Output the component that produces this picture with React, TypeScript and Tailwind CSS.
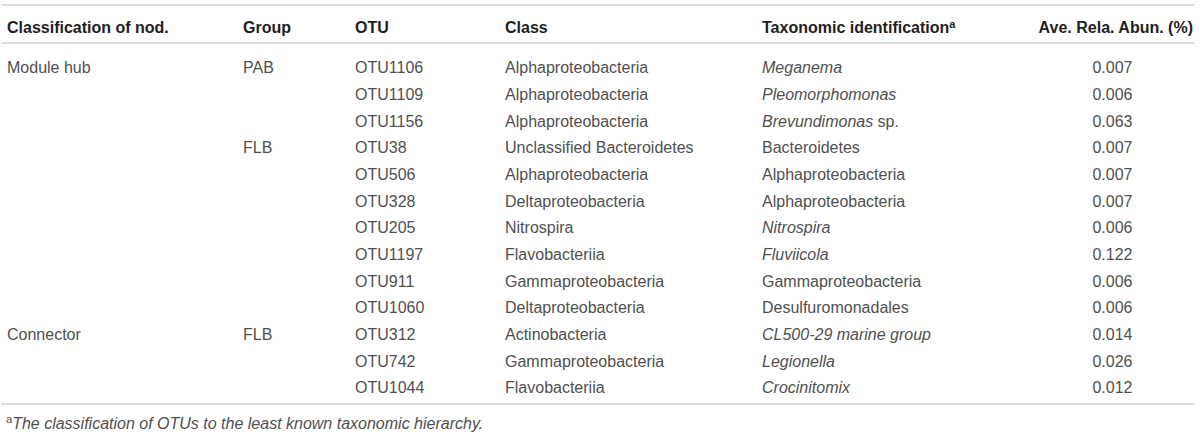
import React from "react";

type Row = {
  cls: string;
  group: string;
  otu: string;
  klass: string;
  tax: string;
  italic: boolean;
  abun: string;
};

const rows: Row[] = [
  { cls: "Module hub", group: "PAB", otu: "OTU1106", klass: "Alphaproteobacteria", tax: "Meganema", italic: true, abun: "0.007" },
  { cls: "", group: "", otu: "OTU1109", klass: "Alphaproteobacteria", tax: "Pleomorphomonas", italic: true, abun: "0.006" },
  { cls: "", group: "", otu: "OTU1156", klass: "Alphaproteobacteria", tax: "Brevundimonas", italic: true, abun: "0.063" },
  { cls: "", group: "FLB", otu: "OTU38", klass: "Unclassified Bacteroidetes", tax: "Bacteroidetes", italic: false, abun: "0.007" },
  { cls: "", group: "", otu: "OTU506", klass: "Alphaproteobacteria", tax: "Alphaproteobacteria", italic: false, abun: "0.007" },
  { cls: "", group: "", otu: "OTU328", klass: "Deltaproteobacteria", tax: "Alphaproteobacteria", italic: false, abun: "0.007" },
  { cls: "", group: "", otu: "OTU205", klass: "Nitrospira", tax: "Nitrospira", italic: true, abun: "0.006" },
  { cls: "", group: "", otu: "OTU1197", klass: "Flavobacteriia", tax: "Fluviicola", italic: true, abun: "0.122" },
  { cls: "", group: "", otu: "OTU911", klass: "Gammaproteobacteria", tax: "Gammaproteobacteria", italic: false, abun: "0.006" },
  { cls: "", group: "", otu: "OTU1060", klass: "Deltaproteobacteria", tax: "Desulfuromonadales", italic: false, abun: "0.006" },
  { cls: "Connector", group: "FLB", otu: "OTU312", klass: "Actinobacteria", tax: "CL500-29 marine group", italic: true, abun: "0.014" },
  { cls: "", group: "", otu: "OTU742", klass: "Gammaproteobacteria", tax: "Legionella", italic: true, abun: "0.026" },
  { cls: "", group: "", otu: "OTU1044", klass: "Flavobacteriia", tax: "Crocinitomix", italic: true, abun: "0.012" },
];

const grid = "grid grid-cols-[236px_112px_150px_257px_270px_161px]";

export default function App() {
  return (
    <div
      className="w-[1200px] h-[438px] bg-white pt-[4px] pl-[1px]"
      style={{ fontFamily: '"Liberation Sans", Arial, sans-serif' }}
    >
      <div className="w-[1193px] border-t-2 border-[#dedede]">
        <div className={`${grid} h-[38px] pt-[8px] items-center pl-[6px] text-[16px] font-bold text-[#1e1e1e] border-b-2 border-[#dedede]`}>
          <div>Classification of nod.</div>
          <div>Group</div>
          <div>OTU</div>
          <div>Class</div>
          <div>
            Taxonomic identification
            <sup className="text-[11px] font-bold">a</sup>
          </div>
          <div className="text-right">Ave. Rela. Abun. (%)</div>
        </div>
        <div className="pt-[11px] pb-[1px] border-b-2 border-[#dedede]">
          {rows.map((r, i) => (
            <div
              key={i}
              className={`${grid} h-[26.67px] items-center pl-[6px] text-[16px] text-[#505050]`}
            >
              <div>{r.cls}</div>
              <div>{r.group}</div>
              <div>{r.otu}</div>
              <div>{r.klass}</div>
              <div>
                <span className={r.italic ? "italic" : ""}>{r.tax}</span>
                {r.tax === "Brevundimonas" ? <span> sp.</span> : null}
              </div>
              <div className="text-center">{r.abun}</div>
            </div>
          ))}
        </div>
        <div className="pl-[5px] pt-[9px] text-[16px] text-[#505050] leading-[20px]">
          <sup className="text-[11px]">a</sup>
          <span className="italic">The classification of OTUs to the least known taxonomic hierarchy.</span>
        </div>
      </div>
    </div>
  );
}
